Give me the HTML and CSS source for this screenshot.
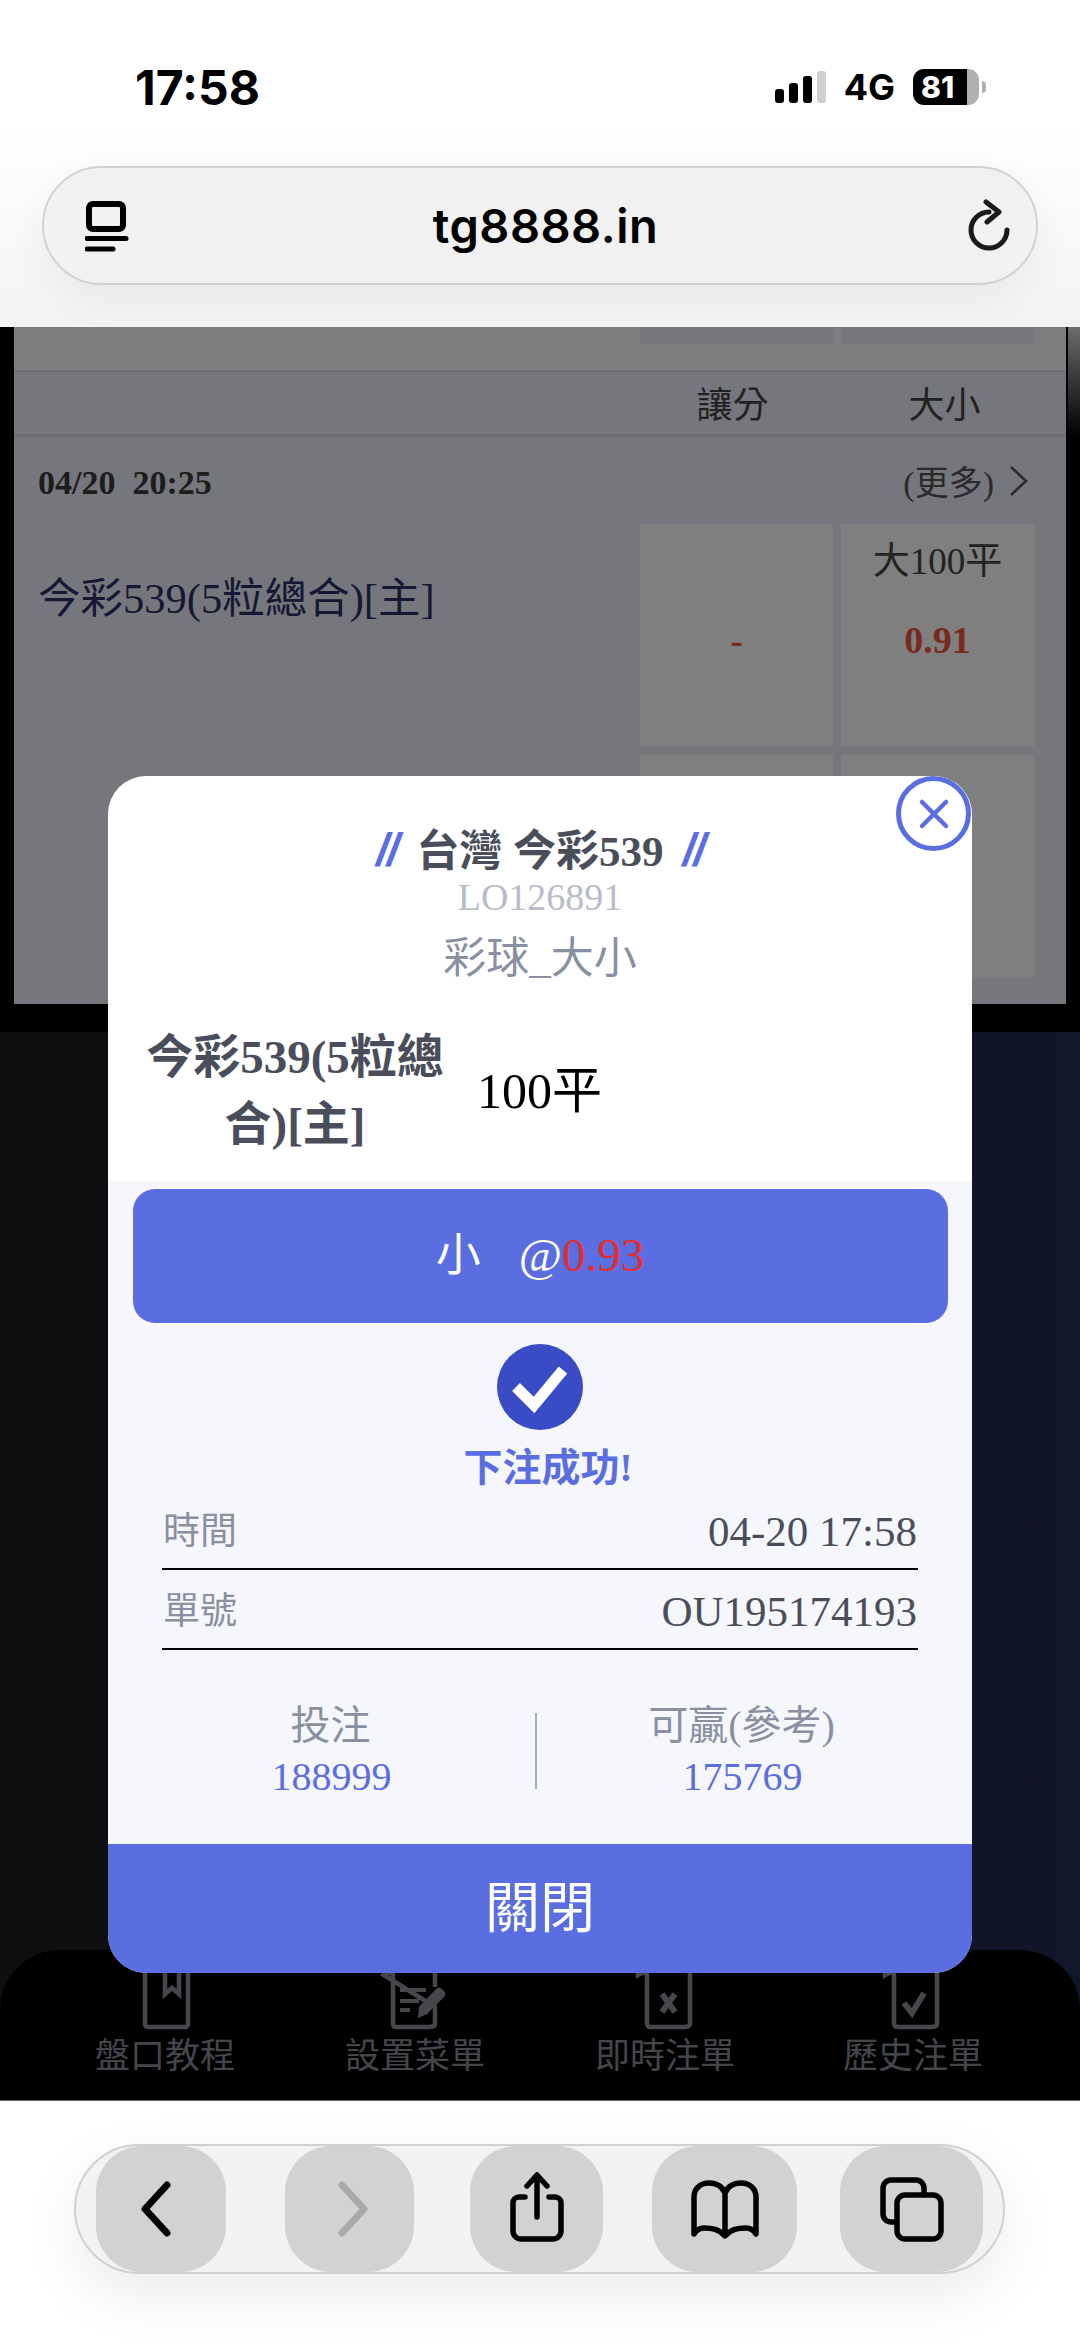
FILE: index.html
```html
<!DOCTYPE html>
<html lang="zh-Hant">
<head>
    <meta charset="UTF-8">
    <meta name="viewport" content="width=device-width, initial-scale=1.0">
    <title>tg8888.in</title>
    <link rel="stylesheet" href="styles.css">
</head>
<body>
<div class="screen">
    <!-- browser top -->
    <header class="topbar">
        <div class="status">
            <span class="clock">17:58</span>
            <div class="status-right">
                <div class="signal"><i class="s1"></i><i class="s2"></i><i class="s3"></i><i class="s4"></i></div>
                <span class="net">4G</span>
                <div class="battery"><div class="battery-body"><span>81</span></div><i class="battery-tip"></i></div>
            </div>
        </div>
        <div class="urlbar">
            <svg class="url-icon" width="44" height="52" viewBox="0 0 44 52" fill="none" stroke="#000">
                <rect x="4" y="4" width="34" height="25" rx="4" stroke-width="6"/>
                <path d="M2 38.500H41" stroke-width="5" stroke-linecap="round"/>
                <path d="M2 49H28" stroke-width="5" stroke-linecap="round"/>
            </svg>
            <span class="url-text">tg8888.in</span>
            <svg class="url-icon" width="46" height="54" viewBox="0 0 46 54" fill="none" stroke="#1a1a1a" stroke-width="5" stroke-linecap="round" stroke-linejoin="round">
                <path d="M25 13A18 18 0 1 0 43 31"/>
                <path d="M22 3L35 13L23 23"/>
            </svg>
        </div>
    </header>

    <!-- page behind the dialog -->
    <main class="page">
        <section class="panel">
            <div class="strip"><div class="stub"></div><div class="stub"></div></div>
            <div class="head-row"><span class="head-cell">讓分</span><span class="head-cell">大小</span></div>
            <div class="date-row">
                <b class="date">04/20&nbsp; 20:25</b>
                <span class="more">(更多)
                    <svg width="22" height="32" viewBox="0 0 22 32" fill="none" stroke="#555" stroke-width="2.500"><path d="M3 2L18 16L3 30"/></svg>
                </span>
            </div>
            <div class="market">
                <div class="market-name">今彩539(5粒總合)[主]</div>
                <div class="odds">
                    <div class="odd"><b class="price">-</b></div>
                    <div class="odd"><span class="line">大100平</span><b class="price">0.91</b></div>
                    <div class="odd"></div>
                    <div class="odd"></div>
                </div>
            </div>
        </section>
        <div class="edge-glow"></div>
        <div class="dark-area">
            <nav class="tabs">
                <div class="tab">
                    <svg width="70" height="65" viewBox="0 0 70 65" fill="none" stroke="#8a8e9a" stroke-width="4.500">
                        <path d="M15 2H58V59a3 3 0 0 1-3 3H18a3 3 0 0 1-3-3Z"/>
                        <path d="M35 0V29L42 23L49 29V0"/>
                    </svg>
                    <span>盤口教程</span>
                </div>
                <div class="tab">
                    <svg width="70" height="65" viewBox="0 0 70 65" fill="none" stroke="#8a8e9a" stroke-width="4.500">
                        <path d="M4 6C4 2 8 2 13 2H48C53 2 55 5 55 9V22M55 42V58C55 61 53 62 50 62H16C13 62 13 60 13 58V10C13 7 9 7 4 10Z"/>
                        <path d="M20 25H46M20 36H39M20 45H30" stroke-width="4"/>
                        <path d="M38 53L39 42L56 24C58 22 60 22 62 24L64 26C66 28 66 30 64 32L47 49Z" fill="#8a8e9a" stroke="none"/>
                    </svg>
                    <span>設置菜單</span>
                </div>
                <div class="tab">
                    <svg width="70" height="65" viewBox="0 0 70 65" fill="none" stroke="#8a8e9a" stroke-width="4.500">
                        <path d="M8 6C8 2 12 2 17 2H52C57 2 60 5 60 9V58C60 61 58 62 55 62H20C18 62 17 60 17 58V10C17 7 13 7 8 10Z"/>
                        <path d="M32 29L45 47M45 29L32 47" stroke-width="6"/>
                    </svg>
                    <span>即時注單</span>
                </div>
                <div class="tab">
                    <svg width="70" height="65" viewBox="0 0 70 65" fill="none" stroke="#8a8e9a" stroke-width="4.500">
                        <path d="M7 6C7 2 11 2 16 2H51C56 2 59 5 59 9V58C59 61 57 62 54 62H19C17 62 16 60 16 58V10C16 7 12 7 7 10Z"/>
                        <path d="M26 38L34 48L46 28" stroke-width="6"/>
                    </svg>
                    <span>歷史注單</span>
                </div>
            </nav>
        </div>
        <div class="backdrop"></div>
    </main>

    <!-- browser bottom -->
    <footer class="bottombar">
        <div class="navpill">
            <div class="nav-btn">
                <svg width="80" height="80" viewBox="0 0 80 80" fill="none" stroke="#000" stroke-width="7" stroke-linecap="round" stroke-linejoin="round"><path d="M46 16L24 40L46 64"/></svg>
            </div>
            <div class="nav-btn">
                <svg width="80" height="80" viewBox="0 0 80 80" fill="none" stroke="#a9a9a9" stroke-width="7" stroke-linecap="round" stroke-linejoin="round"><path d="M32 16L54 40L32 64"/></svg>
            </div>
            <div class="nav-btn">
                <svg width="80" height="80" viewBox="0 0 80 80" fill="none" stroke="#000" stroke-width="5.500" stroke-linecap="round" stroke-linejoin="round">
                    <path d="M28 28H22a6 6 0 0 0-6 6V62a8 8 0 0 0 8 8H56a8 8 0 0 0 8-8V34a6 6 0 0 0-6-6H52"/>
                    <path d="M40 48V7M30 17L40 6L50 17"/>
                </svg>
            </div>
            <div class="nav-btn">
                <svg width="80" height="80" viewBox="0 0 80 80" fill="none" stroke="#000" stroke-width="5.500" stroke-linejoin="round">
                    <path d="M40 24C37 17 31 14 24 14C15 14 9 20 9 28V65C12 60 15 59 19 59C27 59 34 60 40 67C46 60 53 59 61 59C65 59 68 60 71 65V28C71 20 65 14 56 14C49 14 43 17 40 24V66"/>
                </svg>
            </div>
            <div class="nav-btn">
                <svg width="80" height="80" viewBox="0 0 80 80" fill="none" stroke="#000" stroke-width="5.500">
                    <path d="M23 53H19a8 8 0 0 1-8-8V19a8 8 0 0 1 8-8H44a8 8 0 0 1 8 8V25"/>
                    <rect x="25" y="26" width="44" height="44" rx="8"/>
                </svg>
            </div>
        </div>
    </footer>

    <!-- bet result dialog -->
    <div class="dialog">
        <button class="dialog-x">
            <svg width="32" height="32" viewBox="0 0 32 32" fill="none" stroke="#5b6ee1" stroke-width="4.500" stroke-linecap="round"><path d="M4 4L28 28M28 4L4 28"/></svg>
        </button>
        <div class="dialog-head">
            <div class="league"><i class="slash">//</i> 台灣 今彩539 <i class="slash">//</i></div>
            <div class="code">LO126891</div>
            <div class="kind">彩球_大小</div>
            <div class="bet-row">
                <div class="bet-name">今彩539(5粒總合)[主]</div>
                <div class="bet-line">100平</div>
            </div>
        </div>
        <div class="dialog-body">
            <div class="pick"><span class="pick-side">小</span>@<span class="pick-odd">0.93</span></div>
            <svg class="ok-icon" width="86" height="86" viewBox="0 0 86 86">
                <circle cx="43" cy="43" r="43" fill="#3a4cc5"/>
                <path d="M19 43L37 61L66 26" fill="none" stroke="#fff" stroke-width="11"/>
            </svg>
            <div class="ok-text">下注成功!</div>
            <div class="info-row"><span class="info-label">時間</span><span class="info-value">04-20 17:58</span></div>
            <div class="info-row"><span class="info-label">單號</span><span class="info-value">OU195174193</span></div>
            <div class="stats">
                <div class="stat"><div class="stat-label">投注</div><div class="stat-num">188999</div></div>
                <div class="stat-line"></div>
                <div class="stat"><div class="stat-label">可贏(參考)</div><div class="stat-num">175769</div></div>
            </div>
        </div>
        <div class="dialog-close">關閉</div>
    </div>
</div>
</body>
</html>
```

FILE: styles.css
```css
* {
    box-sizing: border-box;
}

body {
    margin: 0;
    font-family: "Liberation Serif", "Noto Sans CJK TC", serif;
    background-color: #fff;
}

.screen {
    position: relative;
    width: 1080px;
    height: 2348px;
    display: flex;
    flex-direction: column;
    overflow: hidden;
}

/* browser top */
.topbar {
    height: 327px;
    flex: none;
    padding: 60px 42px 0;
    background: linear-gradient(#fff 38%, #f3f3f3 100%);
    font-family: Inter, "Liberation Sans", sans-serif;
    color: #000;
}

.status {
    height: 54px;
    display: flex;
    align-items: center;
    justify-content: space-between;
    padding: 0 52px 0 93px;
}

.clock {
    font-size: 48px;
    font-weight: 700;
}

.status-right {
    display: flex;
    align-items: center;
}

.signal {
    display: flex;
    align-items: flex-end;
    gap: 5px;
    height: 32px;
    margin-right: 18px;
}

.signal i {
    width: 9px;
    background-color: #000;
    border-radius: 3px;
}

.s1 { height: 14px; }
.s2 { height: 20px; }
.s3 { height: 27px; }
.signal .s4 { height: 32px; background-color: #cfcfcf; }

.net {
    font-size: 36px;
    font-weight: 700;
    margin-right: 18px;
}

.battery {
    display: flex;
    align-items: center;
}

.battery-body {
    width: 66px;
    height: 36px;
    border-radius: 11px;
    background: linear-gradient(90deg, #000 82%, #b0b0b0 82%);
    color: #fff;
    font-size: 30px;
    font-weight: 800;
    line-height: 36px;
    padding-left: 8px;
}

.battery-tip {
    width: 4px;
    height: 12px;
    margin-left: 3px;
    background-color: #b0b0b0;
    border-radius: 0 6px 6px 0;
}

.urlbar {
    height: 119px;
    margin-top: 52px;
    display: flex;
    align-items: center;
    justify-content: space-between;
    padding: 0 26px 0 41px;
    background-color: #f1f1f1;
    border: 2px solid #d2d2d2;
    border-radius: 60px;
    box-shadow: 0 14px 40px rgba(0, 0, 0, 0.06);
}

.url-icon {
    flex: none;
}

.url-text {
    font-size: 47px;
    font-weight: 600;
    letter-spacing: 0.5px;
    margin-right: 2px;
}

/* page behind the dialog */
.page {
    position: relative;
    flex: 1;
    display: flex;
    flex-direction: column;
    background-color: #000;
}

.panel {
    height: 677px;
    flex: none;
    margin: 0 14px;
    background-color: #eceef8;
    color: #333;
}

.strip {
    height: 45px;
    display: flex;
    justify-content: flex-end;
    gap: 8px;
    padding-right: 32px;
    background-color: #fdfdfd;
    border-bottom: 2px solid #dcdee8;
}

.stub {
    width: 193px;
    height: 17px;
    background-color: #eceef8;
}

.head-row {
    height: 65px;
    display: flex;
    justify-content: flex-end;
    gap: 8px;
    padding-right: 32px;
    border-bottom: 3px solid #dcdee8;
}

.head-cell {
    width: 193px;
    text-align: center;
    font-size: 36px;
    line-height: 68px;
    color: #444;
}

.head-cell:first-child {
    padding-right: 8px;
}

.head-cell:last-child {
    padding-left: 14px;
}

.date-row {
    height: 87px;
    display: flex;
    align-items: center;
    justify-content: space-between;
    padding: 0 36px 0 24px;
}

.date {
    font-size: 34px;
    margin-top: 4px;
    color: #3a3a3a;
}

.more {
    display: flex;
    align-items: center;
    gap: 14px;
    font-size: 34px;
    color: #555;
}

.market {
    display: flex;
    justify-content: space-between;
    padding: 0 32px 0 24px;
}

.market-name {
    font-size: 42.500px;
    line-height: 56px;
    margin-top: 47px;
    color: #2c2e66;
}

.odds {
    display: grid;
    grid-template-columns: 193px 193px;
    grid-auto-rows: 223px;
    gap: 8px;
}

.odd {
    position: relative;
    background-color: #fff;
    text-align: center;
}

.line {
    display: block;
    font-size: 37px;
    line-height: 50px;
    margin-top: 13px;
    color: #444;
}

.price {
    display: block;
    font-size: 38px;
    line-height: 50px;
    color: #f2523c;
}

.odd:first-child .price {
    margin-top: 91px;
}

.line + .price {
    margin-top: 28px;
}

/* light bleeding in at the right edge, top of the page */
.edge-glow {
    position: absolute;
    top: 0;
    right: 0;
    width: 12px;
    height: 110px;
    background: linear-gradient(rgba(255, 255, 255, 0.85), rgba(255, 255, 255, 0));
}

.dark-area {
    flex: 1;
    margin-top: 28px;
    display: flex;
    flex-direction: column;
    justify-content: flex-end;
    background: linear-gradient(90deg, #1a1e22 25%, #242c56 100%);
}

.tabs {
    height: 150px;
    display: grid;
    grid-template-columns: repeat(4, 250px);
    padding: 15px 40px 0;
    background-color: #000;
    border-radius: 60px 60px 0 0;
}

.tab {
    display: flex;
    flex-direction: column;
    align-items: center;
    font-size: 35px;
    line-height: 40px;
    color: #888c96;
}

.tab span {
    margin-top: 7px;
}

.tab:last-child {
    margin-left: -4px;
}

.backdrop {
    position: absolute;
    inset: 0;
    background-color: rgba(0, 0, 0, 0.5);
}

/* browser bottom */
.bottombar {
    height: 248px;
    flex: none;
    padding: 43px 75px 0 74px;
    background-color: #fff;
    border-top: 1px solid #666;
}

.navpill {
    height: 130px;
    display: flex;
    padding-left: 20px;
    background-color: #f2f2f2;
    border: 2px solid #d0d0d0;
    border-radius: 65px;
    box-shadow: 0 22px 60px rgba(0, 0, 0, 0.08);
}

.nav-btn {
    height: 126px;
    display: flex;
    align-items: center;
    justify-content: center;
    background-color: #d2d2d2;
    border-radius: 46px;
}

.nav-btn:nth-child(1) { width: 130px; }
.nav-btn:nth-child(2) { width: 129px; margin-left: 59px; }
.nav-btn:nth-child(3) { width: 133px; margin-left: 56px; }
.nav-btn:nth-child(4) { width: 145px; margin-left: 49px; }
.nav-btn:nth-child(5) { width: 143px; margin-left: 43px; }

/* dialog */
.dialog {
    position: absolute;
    left: 108px;
    top: 776px;
    width: 864px;
    height: 1197px;
    display: flex;
    flex-direction: column;
    background-color: #fff;
    border-radius: 38px;
    overflow: hidden;
}

.dialog-x {
    position: absolute;
    top: 0;
    right: 1px;
    width: 75px;
    height: 75px;
    display: flex;
    align-items: center;
    justify-content: center;
    padding: 0;
    background-color: #fff;
    border: 5px solid #5b6ee1;
    border-radius: 50%;
}

.dialog-head {
    height: 405px;
    flex: none;
    padding-top: 49px;
    text-align: center;
}

.league {
    font-size: 43px;
    font-weight: 700;
    line-height: 50px;
    color: #4a4e5a;
}

.slash {
    color: #5b6ee1;
    font-family: "Liberation Sans", sans-serif;
    font-size: 46px;
    letter-spacing: -2px;
    margin: 0 8px;
}

.code {
    font-size: 38px;
    line-height: 42px;
    margin-top: -1px;
    color: #b8bcc8;
}

.kind {
    font-size: 43px;
    line-height: 60px;
    margin-top: 11px;
    color: #8a90a2;
}

.bet-row {
    display: flex;
    align-items: center;
    margin-top: 35px;
    padding-left: 27px;
}

.bet-name {
    width: 320px;
    font-size: 47px;
    font-weight: 700;
    line-height: 67px;
    color: #4a4e5a;
}

.bet-line {
    margin-left: 22px;
    font-size: 50px;
    line-height: 60px;
    color: #000;
}

.dialog-body {
    flex: 1;
    padding: 8px 24px 0;
    display: flex;
    flex-direction: column;
    align-items: center;
    background-color: #f6f7fd;
}

.pick {
    width: 815px;
    height: 134px;
    flex: none;
    text-align: center;
    font-size: 47px;
    line-height: 132px;
    color: #fff;
    background-color: #5b6ee1;
    border-radius: 22px;
}

.pick-side {
    font-size: 45px;
    margin-right: 38px;
}

.pick-odd {
    color: #e32d2d;
}

.ok-icon {
    flex: none;
    margin-top: 21px;
}

.ok-text {
    margin: 16px 0 0 16px;
    font-size: 39px;
    font-weight: 700;
    line-height: 44px;
    color: #5b6ee1;
}

.info-row {
    width: 756px;
    height: 80px;
    flex: none;
    display: flex;
    align-items: center;
    justify-content: space-between;
    padding: 0 1px 0 1px;
    border-bottom: 2px solid #000;
}

.info-label {
    font-size: 37px;
    color: #8a90a2;
    margin-bottom: 2px;
}

.info-value {
    font-size: 43px;
    color: #4a4e5a;
    margin-top: 4px;
}

.stats {
    width: 820px;
    margin: 50px 8px 0 0;
    display: flex;
    align-items: center;
    text-align: center;
}

.stat {
    flex: 1;
}

.stat-label {
    font-size: 40px;
    line-height: 52px;
    color: #8a90a2;
}

.stat-num {
    font-size: 40px;
    line-height: 50px;
    margin-left: 2px;
    color: #5b6ee1;
}

.stat-line {
    width: 2px;
    height: 76px;
    background-color: #a5abc0;
}

.dialog-close {
    height: 129px;
    flex: none;
    text-align: center;
    font-size: 55px;
    line-height: 130px;
    color: #fff;
    background-color: #5b6ee1;
}
```
